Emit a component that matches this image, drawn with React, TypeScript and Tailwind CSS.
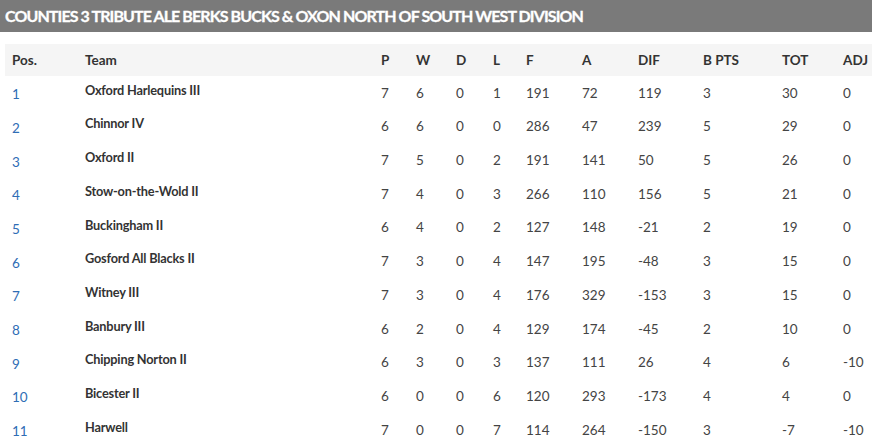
const rows: (string | number)[][] = [
  [1, "Oxford Harlequins III", 7, 6, 0, 1, 191, 72, 119, 3, 30, 0],
  [2, "Chinnor IV", 6, 6, 0, 0, 286, 47, 239, 5, 29, 0],
  [3, "Oxford II", 7, 5, 0, 2, 191, 141, 50, 5, 26, 0],
  [4, "Stow-on-the-Wold II", 7, 4, 0, 3, 266, 110, 156, 5, 21, 0],
  [5, "Buckingham II", 6, 4, 0, 2, 127, 148, -21, 2, 19, 0],
  [6, "Gosford All Blacks II", 7, 3, 0, 4, 147, 195, -48, 3, 15, 0],
  [7, "Witney III", 7, 3, 0, 4, 176, 329, -153, 3, 15, 0],
  [8, "Banbury III", 6, 2, 0, 4, 129, 174, -45, 2, 10, 0],
  [9, "Chipping Norton II", 6, 3, 0, 3, 137, 111, 26, 4, 6, -10],
  [10, "Bicester II", 6, 0, 0, 6, 120, 293, -173, 4, 4, 0],
  [11, "Harwell", 7, 0, 0, 7, 114, 264, -150, 3, -7, -10],
]

const headers = ["Pos.", "Team", "P", "W", "D", "L", "F", "A", "DIF", "B PTS", "TOT", "ADJ"]
const widths = [73, 296, 35, 40, 37, 33, 56, 56, 65, 79, 61, 36]

export default function App() {
  return (
    <div className="w-[872px] h-[446px] overflow-hidden bg-white font-['Lato','Liberation_Sans',sans-serif]">
      <div className="h-8 bg-[#7a7a7a] px-[5px] flex items-center">
        <h2 className="text-white font-bold text-[16px] tracking-[-0.9px] uppercase [-webkit-text-stroke:0.3px_white]">
          Counties 3 Tribute Ale Berks Bucks &amp; Oxon North of South West Division
        </h2>
      </div>
      <div className="pl-[5px] pt-3">
        <table className="table-fixed border-collapse w-[867px]">
          <colgroup>
            {widths.map((w, i) => (
              <col key={i} style={{ width: w }} />
            ))}
          </colgroup>
          <thead>
            <tr className="bg-[#f5f5f5] h-8">
              {headers.map((h) => (
                <th key={h} className="text-left font-bold text-[13.5px] text-[#333] pl-[7px] whitespace-nowrap">
                  {h}
                </th>
              ))}
            </tr>
          </thead>
          <tbody>
            {rows.map((r) => (
              <tr key={r[0]} className="h-[33.7px]">
                {r.map((v, i) => (
                  <td
                    key={i}
                    className={
                      i === 0
                        ? "pl-[7px] pt-[3px] text-[13.5px] text-[#2f6db5]"
                        : i === 1
                          ? "pl-[7px] pb-[5px] text-[12.75px] tracking-[-0.2px] font-bold text-[#333] whitespace-nowrap"
                          : "pl-[7px] text-[13.5px] text-[#444]"
                    }
                  >
                    {v}
                  </td>
                ))}
              </tr>
            ))}
          </tbody>
        </table>
      </div>
    </div>
  )
}
